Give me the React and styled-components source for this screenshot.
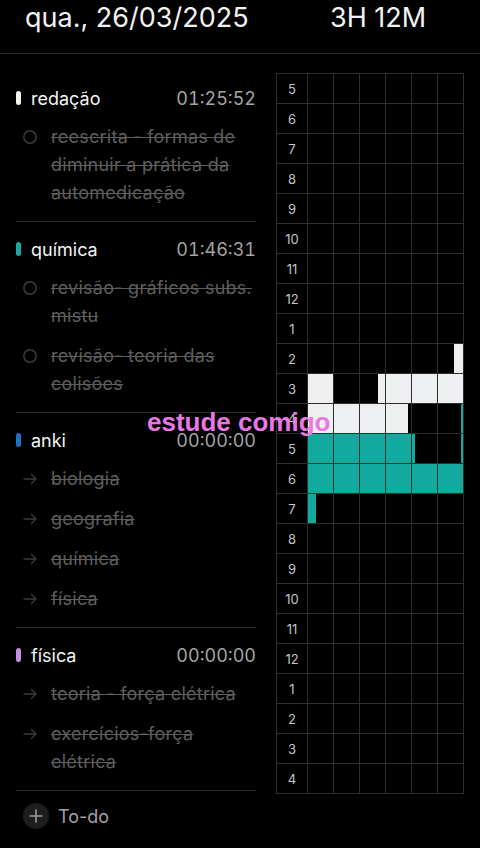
import React from "react"
import styled, { createGlobalStyle } from "styled-components"

const GlobalStyle = createGlobalStyle`
  html, body {
    margin: 0;
    padding: 0;
    background: #000;
  }
  body {
    font-family: Inter, "Noto Sans", sans-serif;
    color: #f0f0f0;
    -webkit-font-smoothing: antialiased;
  }
`

const Page = styled.div`
  position: relative;
  width: 480px;
  height: 848px;
  overflow: hidden;
  background: #000;
`

const Header = styled.header`
  display: flex;
  align-items: flex-start;
  height: 53px;
  padding: 0 25px;
  border-bottom: 1px solid #2a2a2a;
  font-size: 27px;
  line-height: 36px;
  color: #f2f2f2;
`

const DateText = styled.div`
  flex: 0 0 305px;
`

const Total = styled.div``

const Main = styled.main`
  display: flex;
  gap: 20px;
  padding: 17px 0 0 16px;
`

const Tasks = styled.div`
  width: 240px;
  display: flex;
  flex-direction: column;
`

const Section = styled.section`
  display: flex;
  flex-direction: column;
  gap: 12px;
  padding: 14px 0;
  border-bottom: 1px solid #2a2a2a;
`

const SectionHead = styled.div`
  display: flex;
  align-items: center;
  height: 26px;
  font-size: 18px;
`

const Tag = styled.span`
  width: 5px;
  height: 14px;
  border-radius: 3px;
  background: ${(p) => p.$color};
  margin-right: 10px;
`

const Title = styled.span`
  color: #f4f4f4;
`

const Clock = styled.span`
  margin-left: auto;
  color: #a3a3a3;
  font-feature-settings: "tnum";
`

const Item = styled.div`
  display: flex;
  align-items: flex-start;
  padding-left: 7px;
  gap: 14px;
`

const IconBox = styled.span`
  flex: 0 0 14px;
  height: 28px;
  display: flex;
  align-items: center;
  color: #3b3b3b;
`

const ItemText = styled.span`
  font-size: 18px;
  line-height: 28px;
  letter-spacing: 0.25px;
  color: #5e5e5e;
  text-decoration: line-through;
  text-decoration-thickness: 1px;
  white-space: nowrap;
`

const AddRow = styled.div`
  display: flex;
  align-items: center;
  gap: 9px;
  padding: 12px 0 0 7px;
  font-size: 18px;
  color: #a3a3a3;
`

const AddButton = styled.span`
  width: 26px;
  height: 26px;
  border-radius: 50%;
  background: #1d1d1d;
  display: flex;
  align-items: center;
  justify-content: center;
  color: #9c9c9c;
`

const Grid = styled.div`
  margin-top: 2px;
  display: grid;
  grid-template-columns: 31px repeat(6, 26px);
  grid-auto-rows: 30px;
  border-left: 1px solid #2e2e2e;
  border-top: 1px solid #2e2e2e;
  align-self: flex-start;
`

const Cell = styled.div`
  box-sizing: border-box;
  display: flex;
  border-right: 1px solid #2e2e2e;
  border-bottom: 1px solid #2e2e2e;
`

const HourLabel = styled(Cell)`
  align-items: center;
  justify-content: center;
  font-size: 13px;
  color: #c4c4c4;
`

const Fill = styled.span`
  height: 100%;
  background: ${(p) => (p.$kind === "teal" ? "#12a99f" : "#eeeff1")};
`

const Overlay = styled.div`
  position: absolute;
  top: 409px;
  left: 147px;
  font-family: "Liberation Sans", Arial, sans-serif;
  font-weight: 700;
  font-size: 26px;
  line-height: 26px;
  color: #e878e4;
  white-space: nowrap;
`

const Circle = () => (
  <svg width="14" height="14" viewBox="0 0 14 14" fill="none">
    <circle cx="7" cy="7" r="6.2" stroke="currentColor" strokeWidth="1.5" />
  </svg>
)

const Arrow = () => (
  <svg width="14" height="14" viewBox="0 0 14 14" fill="none" stroke="currentColor" strokeWidth="1.3" strokeLinecap="round" strokeLinejoin="round">
    <path d="M1 7h12M8.5 2.5 13 7l-4.5 4.5" />
  </svg>
)

const Plus = () => (
  <svg width="14" height="14" viewBox="0 0 14 14" fill="none" stroke="currentColor" strokeWidth="1.6" strokeLinecap="round">
    <path d="M7 1v12M1 7h12" />
  </svg>
)

const sections = [
  {
    title: "redação",
    color: "#f2f2f2",
    time: "01:25:52",
    icon: "circle",
    items: [["reescrita - formas de", "diminuir a prática da", "automedicação"]],
  },
  {
    title: "química",
    color: "#1aa89f",
    time: "01:46:31",
    icon: "circle",
    items: [
      ["revisão- gráficos subs.", "mistu"],
      ["revisão- teoria das", "colisões"],
    ],
  },
  {
    title: "anki",
    color: "#1f6fc4",
    time: "00:00:00",
    icon: "arrow",
    items: [["biologia"], ["geografia"], ["química"], ["física"]],
  },
  {
    title: "física",
    color: "#c58de0",
    time: "00:00:00",
    icon: "arrow",
    items: [["teoria - força elétrica"], ["exercícios-força", "elétrica"]],
  },
]

const hours = [5, 6, 7, 8, 9, 10, 11, 12, 1, 2, 3, 4, 5, 6, 7, 8, 9, 10, 11, 12, 1, 2, 3, 4]

// minutes studied per hour row: [start, end, kind]
const sessions = {
  9: [[56.5, 60, "white"]],
  10: [[0, 10, "white"], [27, 60, "white"]],
  11: [[0, 38.6, "white"], [59.3, 60, "teal"]],
  12: [[0, 41.2, "teal"], [59.3, 60, "teal"]],
  13: [[0, 60, "teal"]],
  14: [[0, 3.2, "teal"]],
}

function cellFill(row, col) {
  const segs = sessions[row] || []
  const lo = col * 10
  const hi = lo + 10
  for (const [s, e, kind] of segs) {
    const a = Math.max(s, lo)
    const b = Math.min(e, hi)
    if (b > a) return { left: ((a - lo) / 10) * 100, width: ((b - a) / 10) * 100, kind }
  }
  return null
}

function Timeline() {
  return (
    <Grid>
      {hours.map((h, row) => (
        <React.Fragment key={row}>
          <HourLabel>{h}</HourLabel>
          {[0, 1, 2, 3, 4, 5].map((col) => {
            const f = cellFill(row, col)
            return (
              <Cell key={col}>
                {f && <Fill $kind={f.kind} style={{ marginLeft: `${f.left}%`, width: `${f.width}%` }} />}
              </Cell>
            )
          })}
        </React.Fragment>
      ))}
    </Grid>
  )
}

export default function App() {
  return (
    <Page>
      <GlobalStyle />
      <Header>
        <DateText>qua., 26/03/2025</DateText>
        <Total>3H 12M</Total>
      </Header>
      <Main>
        <Tasks>
          {sections.map((s) => (
            <Section key={s.title}>
              <SectionHead>
                <Tag $color={s.color} />
                <Title>{s.title}</Title>
                <Clock>{s.time}</Clock>
              </SectionHead>
              {s.items.map((lines, i) => (
                <Item key={i}>
                  <IconBox>{s.icon === "circle" ? <Circle /> : <Arrow />}</IconBox>
                  <ItemText>
                    {lines.map((l, j) => (
                      <React.Fragment key={j}>
                        {j > 0 && <br />}
                        {l}
                      </React.Fragment>
                    ))}
                  </ItemText>
                </Item>
              ))}
            </Section>
          ))}
          <AddRow>
            <AddButton>
              <Plus />
            </AddButton>
            To-do
          </AddRow>
        </Tasks>
        <Timeline />
      </Main>
      <Overlay>estude comigo</Overlay>
    </Page>
  )
}
